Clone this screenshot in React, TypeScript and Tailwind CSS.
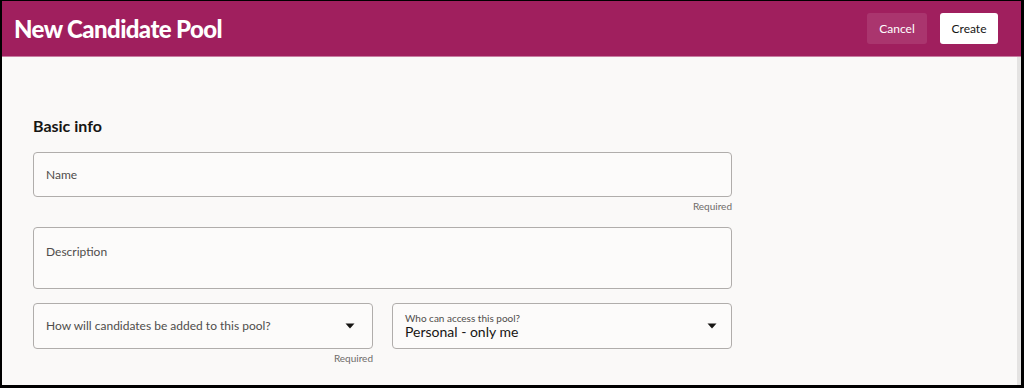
const FONT = { fontFamily: 'Lato, "Noto Sans", sans-serif' };

function Caret() {
  return (
    <svg width="10" height="6" viewBox="0 0 10 6" className="shrink-0">
      <path d="M0.5 0.5 L9.5 0.5 L5 5.5 Z" fill="#161513" />
    </svg>
  );
}

export default function App() {
  return (
    <div
      className="flex h-[388px] w-[1024px] flex-col bg-black pb-[3px] pl-[2px] pr-[3px] pt-[1px]"
      style={FONT}
    >
      <div className="flex h-[55px] shrink-0 items-center justify-between bg-[#a01f5e] pl-[12px] pr-[23px]">
        <h1 className="text-[24px] font-black leading-none tracking-[-0.6px] text-white">New Candidate Pool</h1>
        <div className="flex items-center gap-[13px]">
          <button className="h-[31px] w-[60px] rounded-[3px] bg-white/10 text-[12px] text-white">Cancel</button>
          <button className="h-[31px] w-[58px] rounded-[3px] bg-white text-[12px] text-[#161513]">Create</button>
        </div>
      </div>
      <div className="flex flex-1 border-t border-[#c87ea2]">
        <div className="flex-1 bg-[#faf9f8] pl-[31px] pt-[59px]">
          <h2 className="text-[16px] font-bold leading-[20px] text-[#161513]">Basic info</h2>
          <div className="mt-[16px] w-[699px]">
            <div className="flex h-[45px] items-center rounded-[4px] border border-[#b0adab] bg-[#fcfbfa] px-[12px]">
              <span className="text-[12px] text-[#4f4d4b]">Name</span>
            </div>
            <div className="mt-[2px] text-right text-[10px] leading-[14px] text-[#6f6c69]">Required</div>
            <div className="mt-[14px] flex h-[62px] items-start rounded-[4px] border border-[#b0adab] bg-[#fcfbfa] px-[12px] pt-[15px]">
              <span className="text-[12px] text-[#4f4d4b]">Description</span>
            </div>
            <div className="mt-[14px] grid grid-cols-2 gap-[19px]">
              <div>
                <div className="flex h-[46px] items-center justify-between rounded-[4px] border border-[#b0adab] bg-[#fcfbfa] pl-[12px] pr-[17px]">
                  <span className="text-[12px] text-[#4f4d4b]">How will candidates be added to this pool?</span>
                  <Caret />
                </div>
                <div className="mt-[2px] text-right text-[10px] leading-[14px] text-[#6f6c69]">Required</div>
              </div>
              <div>
                <div className="flex h-[46px] items-center justify-between rounded-[4px] border border-[#b0adab] bg-[#fcfbfa] pl-[12px] pr-[14px]">
                  <div className="flex flex-col">
                    <span className="text-[10px] leading-[12px] text-[#4f4d4b]">Who can access this pool?</span>
                    <span className="text-[14px] leading-[16px] text-[#161513]">Personal - only me</span>
                  </div>
                  <Caret />
                </div>
              </div>
            </div>
          </div>
        </div>
        <div className="w-[4px] bg-[#e4e3e2]" />
      </div>
    </div>
  );
}
